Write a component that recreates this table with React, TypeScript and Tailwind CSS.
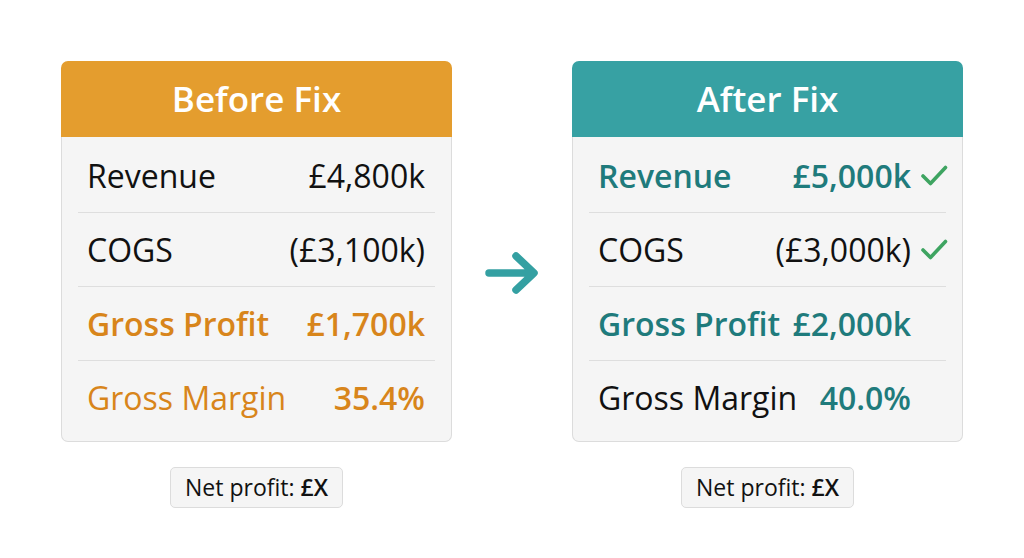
import React from "react";

type Row = {
  label: string;
  value: string;
  labelCls: string;
  valueCls: string;
  check?: boolean;
};

function Check({ show }: { show: boolean }) {
  return (
    <div className="w-[37px] flex justify-end -mr-[2px]">
      {show ? (
        <svg width="28" height="23" viewBox="0 0 28 23">
          <path d="M3 12 L10.5 19.5 L25.5 3.5" fill="none" stroke="#3ea461" strokeWidth="3.6" strokeLinecap="round" strokeLinejoin="round" />
        </svg>
      ) : null}
    </div>
  );
}

function Card({
  title,
  headerCls,
  rows,
  withChecks,
}: {
  title: string;
  headerCls: string;
  rows: Row[];
  withChecks?: boolean;
}) {
  return (
    <div className="w-[391px] flex flex-col">
      <div className={`h-[76px] rounded-t-[7px] flex items-center justify-center ${headerCls}`}>
        <span className="text-white text-[35px] font-semibold leading-none pb-[2px]">{title}</span>
      </div>
      <div className="bg-[#f5f5f5] border-x border-b border-[#dcdcdc] rounded-b-[7px] pt-[2px] pb-[7px]">
        <div className="mx-4">
          {rows.map((r, i) => (
            <div
              key={r.label}
              className={`flex items-center ${i > 0 ? "h-[74px] border-t border-[#dedede]" : "h-[73px]"} ${withChecks ? "pl-[9px]" : "pl-[9px] pr-[10px]"}`}
            >
              <span className={`text-[32px] ${r.labelCls}`}>{r.label}</span>
              <span className={`ml-auto text-[32px] ${r.valueCls}`}>{r.value}</span>
              {withChecks ? <Check show={!!r.check} /> : null}
            </div>
          ))}
        </div>
      </div>
    </div>
  );
}

function NetProfit() {
  return (
    <div className="mt-[25px] self-center h-[41px] w-[173px] rounded-[5px] bg-[#f5f5f5] border border-[#dcdcdc] flex items-center justify-center text-[23px] text-[#111]">
      <span>
        Net profit: <span className="font-semibold">£X</span>
      </span>
    </div>
  );
}

export default function App() {
  const before: Row[] = [
    { label: "Revenue", value: "£4,800k", labelCls: "text-[#111]", valueCls: "text-[#111]" },
    { label: "COGS", value: "(£3,100k)", labelCls: "text-[#111]", valueCls: "text-[#111]" },
    { label: "Gross Profit", value: "£1,700k", labelCls: "text-[#d8851b] font-semibold", valueCls: "text-[#d8851b] font-semibold" },
    { label: "Gross Margin", value: "35.4%", labelCls: "text-[#d8851b]", valueCls: "text-[#d8851b] font-semibold" },
  ];
  const after: Row[] = [
    { label: "Revenue", value: "£5,000k", labelCls: "text-[#1f7b7c] font-semibold", valueCls: "text-[#1f7b7c] font-semibold", check: true },
    { label: "COGS", value: "(£3,000k)", labelCls: "text-[#111]", valueCls: "text-[#111]", check: true },
    { label: "Gross Profit", value: "£2,000k", labelCls: "text-[#1f7b7c] font-semibold", valueCls: "text-[#1f7b7c] font-semibold" },
    { label: "Gross Margin", value: "40.0%", labelCls: "text-[#111]", valueCls: "text-[#1f7b7c] font-semibold" },
  ];
  return (
    <div
      className="w-[1024px] h-[558px] bg-white flex justify-center pt-[61px]"
      style={{ fontFamily: '"Open Sans", "Noto Sans", sans-serif' }}
    >
      <div className="flex flex-col">
        <Card title="Before Fix" headerCls="bg-[#e49d2e]" rows={before} />
        <NetProfit />
      </div>
      <div className="w-[120px] flex justify-center pt-[190px]">
        <svg width="54" height="44" viewBox="0 0 54 44" className="h-[44px]">
          <path d="M4 22 H48 M31 5 L49 22 L31 39" fill="none" stroke="#34a0a2" strokeWidth="7.5" strokeLinecap="round" strokeLinejoin="round" />
        </svg>
      </div>
      <div className="flex flex-col">
        <Card title="After Fix" headerCls="bg-[#37a1a3]" rows={after} withChecks />
        <NetProfit />
      </div>
    </div>
  );
}
